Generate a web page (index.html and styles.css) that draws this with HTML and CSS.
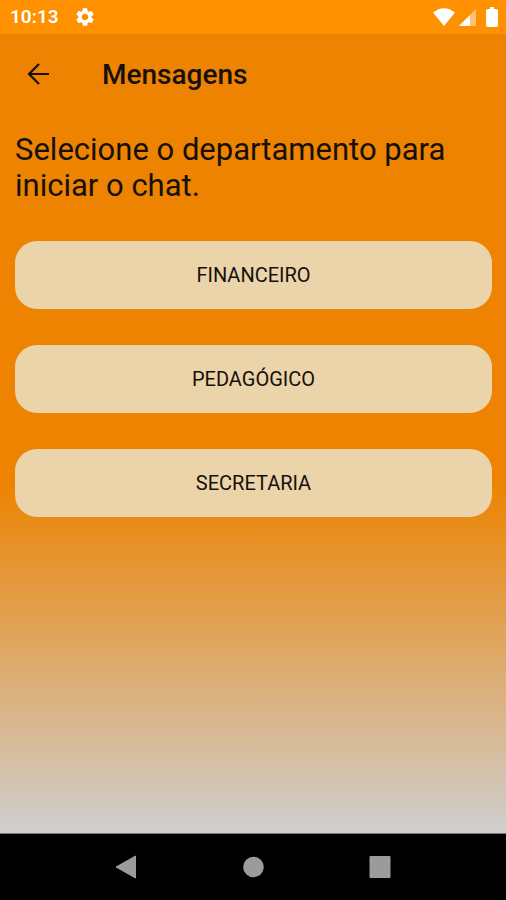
FILE: index.html
```html
<!DOCTYPE html>
<html lang="pt-BR">
<head>
<meta charset="utf-8">
<meta name="viewport" content="width=device-width, initial-scale=1">
<title>Mensagens</title>
<link rel="stylesheet" href="styles.css">
</head>
<body>
<div class="status">
  <span class="time">10:13</span>
  <svg class="gear" width="22" height="22" viewBox="0 0 24 24" aria-hidden="true"><path fill="#fff" d="M19.14 12.94c.04-.3.06-.61.06-.94 0-.32-.02-.64-.07-.94l2.03-1.58c.18-.14.23-.41.12-.61l-1.92-3.32c-.12-.22-.37-.29-.59-.22l-2.39.96c-.5-.38-1.03-.7-1.62-.94l-.36-2.54c-.04-.24-.24-.41-.48-.41h-3.84c-.24 0-.43.17-.47.41l-.36 2.54c-.59.24-1.13.57-1.62.94l-2.39-.96c-.22-.08-.47 0-.59.22L2.74 8.87c-.12.21-.08.47.12.61l2.03 1.58c-.05.3-.09.63-.09.94s.02.64.07.94l-2.03 1.58c-.18.14-.23.41-.12.61l1.92 3.32c.12.22.37.29.59.22l2.39-.96c.5.38 1.03.7 1.62.94l.36 2.54c.05.24.24.41.48.41h3.84c.24 0 .44-.17.47-.41l.36-2.54c.59-.24 1.13-.56 1.62-.94l2.39.96c.22.08.47 0 .59-.22l1.92-3.32c.12-.22.07-.47-.12-.61l-2.01-1.58zM12 15.6c-1.98 0-3.6-1.62-3.6-3.6s1.62-3.6 3.6-3.6 3.6 1.62 3.6 3.6-1.62 3.6-3.6 3.6z"/></svg>
  <div class="signals">
    <svg width="22" height="18" viewBox="0 0 22 18" aria-hidden="true"><path fill="#fff" d="M0 4.500Q11-4 22 4.500L11 18Z"/></svg>
    <svg class="cell" width="17" height="18" viewBox="0 0 17 18" aria-hidden="true"><path fill="#ffc176" d="M17 1V18H0Z"/><path fill="#fff" d="M11 7V18H0Z"/></svg>
    <svg width="12" height="20" viewBox="0 0 12 20" aria-hidden="true"><path fill="#fff" d="M4 0h4v2h2q2 0 2 2v14q0 2-2 2H2q-2 0-2-2V4q0-2 2-2h2z"/></svg>
  </div>
</div>
<div class="screen">
  <header class="bar">
    <button class="back" aria-label="Voltar"><svg width="30" height="30" viewBox="0 0 30 30" aria-hidden="true"><path fill="none" stroke="#15100a" stroke-width="2.200" d="M26 15H6M16 5L6 15L16 25"/></svg></button>
    <h1>Mensagens</h1>
  </header>
  <main>
    <p>Selecione o departamento para iniciar o chat.</p>
    <div class="options">
      <button>FINANCEIRO</button>
      <button>PEDAGÓGICO</button>
      <button>SECRETARIA</button>
    </div>
  </main>
</div>
<nav class="nav">
  <button aria-label="Voltar ao anterior"><svg width="24" height="26" viewBox="0 0 24 26" aria-hidden="true"><path fill="#9b9b9b" stroke="#9b9b9b" stroke-linejoin="round" d="M21.500 2v22L2 13z"/></svg></button>
  <button aria-label="Início"><svg width="24" height="26" viewBox="0 0 24 26" aria-hidden="true"><circle cx="12.500" cy="13" r="10.300" fill="#9b9b9b"/></svg></button>
  <button aria-label="Recentes"><svg width="24" height="26" viewBox="0 0 24 26" aria-hidden="true"><rect x="1.500" y="2" width="21" height="22" rx="1" fill="#9b9b9b"/></svg></button>
</nav>
</body>
</html>
```
FILE: styles.css
```css
* { box-sizing: border-box; }
body {
  margin: 0;
  min-height: 100vh;
  display: flex;
  flex-direction: column;
  font-family: Roboto, "Liberation Sans", sans-serif;
  color: #15100a;
}
button {
  border: 0;
  padding: 0;
  background: none;
  font: inherit;
  color: inherit;
}
svg { display: block; }
.status {
  height: 34px;
  padding: 0 8px 0 10px;
  display: flex;
  align-items: center;
  background: #ff9100;
  color: #fff;
}
.time { font-size: 19px; font-weight: 600; line-height: 36px; }
.gear { margin-left: 15px; }
.signals { margin-left: auto; display: flex; align-items: center; gap: 4px; }
.cell { margin-right: 6px; }
.screen {
  flex: 1;
  background: linear-gradient(#ed8300 0%, #ed8300 56%, #cfcfcf 100%);
}
.bar {
  height: 80px;
  padding: 0 23px;
  display: flex;
  align-items: center;
  gap: 49px;
}
h1 { margin: 0; font-size: 28px; font-weight: 500; }
main { padding: 18px 14px 16px 15px; }
p { margin: 0; font-size: 31px; line-height: 36px; }
.options {
  margin-top: 37px;
  display: flex;
  flex-direction: column;
  gap: 36px;
}
.options button {
  height: 68px;
  border-radius: 22px;
  background: #ebd3aa;
  font-size: 20px;
}
.nav {
  height: 67px;
  display: flex;
  justify-content: center;
  align-items: center;
  gap: 103px;
  border-top: 1px solid #777;
  background: #000;
}
```
